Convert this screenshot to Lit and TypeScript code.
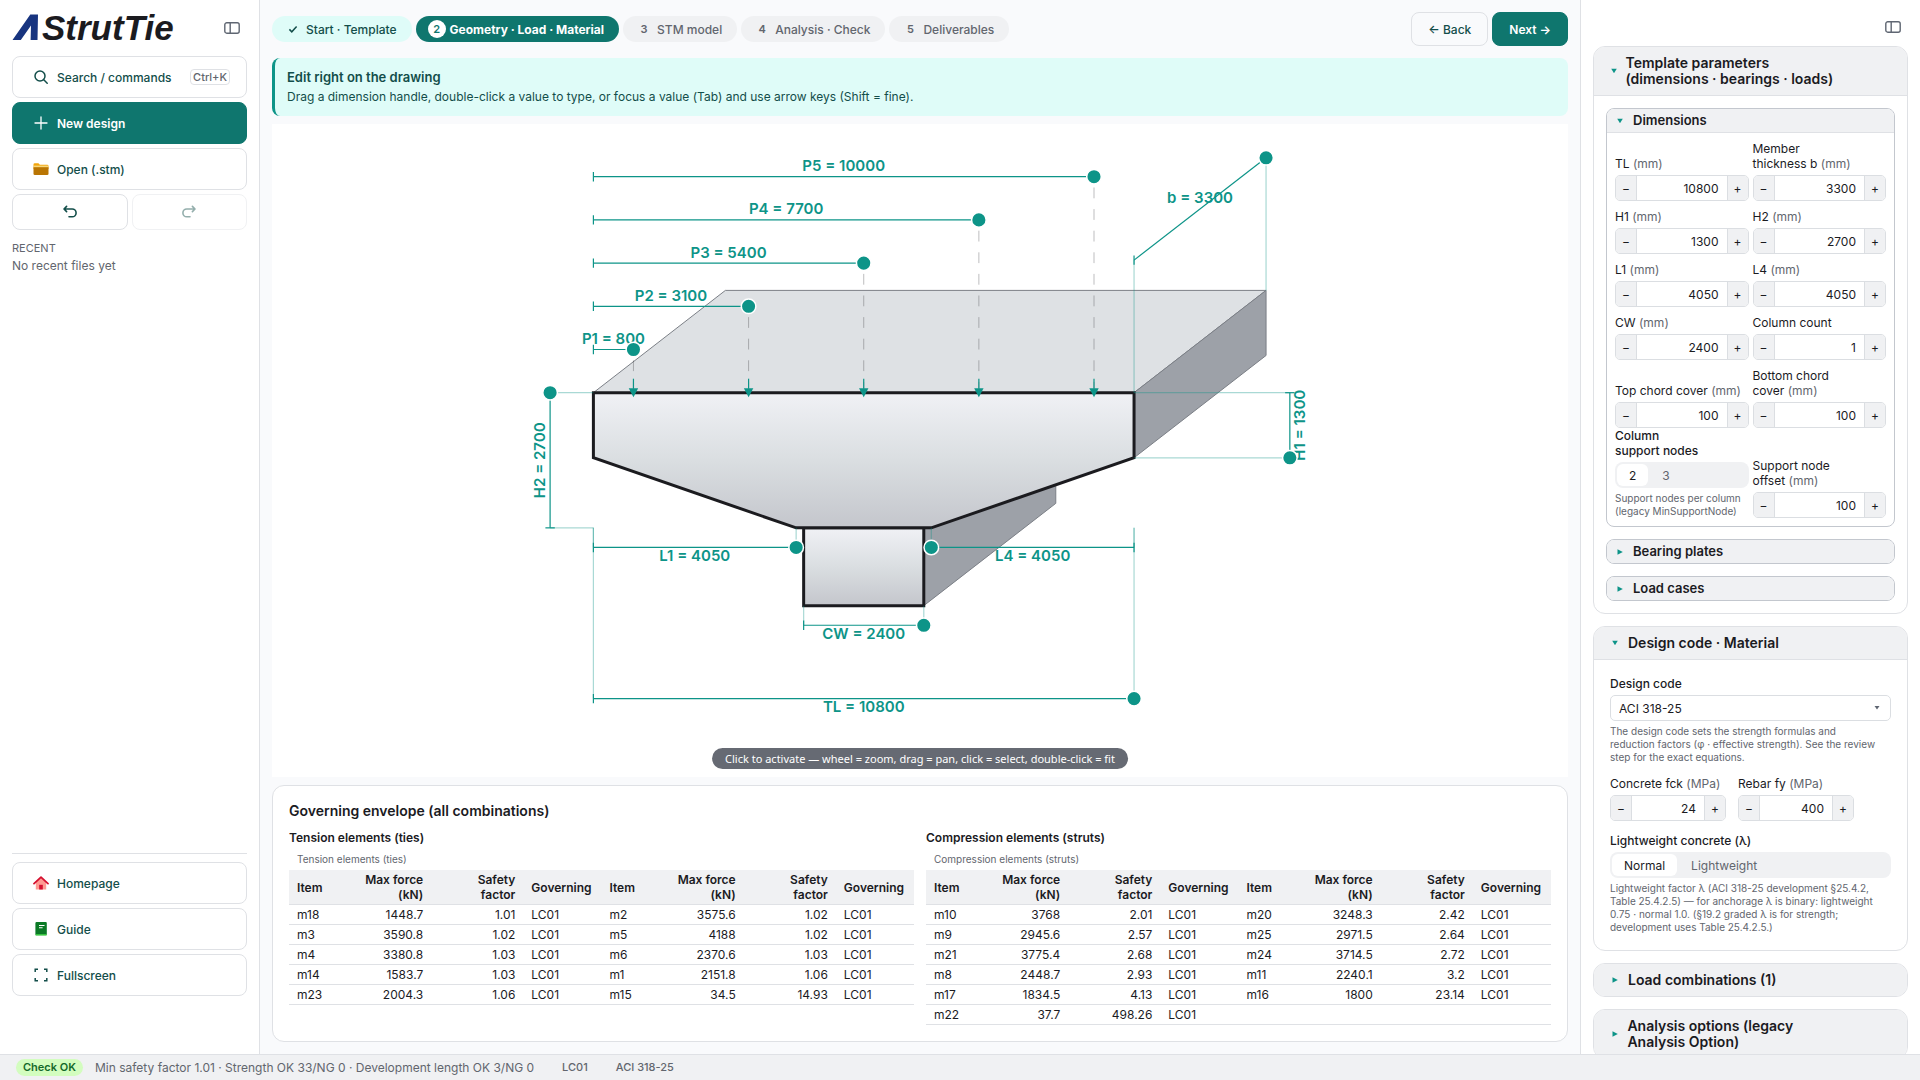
import { LitElement, html, svg, css, nothing } from "lit";
import { customElement, property, state } from "lit/decorators.js";
import { classMap } from "lit/directives/class-map.js";

const base = css`
  *, *::before, *::after { box-sizing: border-box; }
  :host { display: block; }
  button, input, select { font: inherit; color: inherit; margin: 0; }
  svg { display: block; flex: none; }
`;

/* ---------- icons ---------- */

const panelIcon = html`<svg width="16" height="12" viewBox="0 0 16 12" fill="none" stroke="#5f6672" stroke-width="1.4" aria-hidden="true">
  <rect x="0.8" y="0.8" width="14.4" height="10.4" rx="2" /><path d="M6.2 1v10" /></svg>`;

const searchIcon = html`<svg width="16" height="16" viewBox="0 0 16 16" fill="none" stroke="#134e4a" stroke-width="1.5" stroke-linecap="round" aria-hidden="true">
  <circle cx="7" cy="7" r="5" /><path d="M10.8 10.8 14.2 14.2" /></svg>`;

const plusIcon = html`<svg width="16" height="16" viewBox="0 0 16 16" fill="none" stroke="#ffffff" stroke-width="1.3" stroke-linecap="round" aria-hidden="true">
  <path d="M8 2v12M2 8h12" /></svg>`;

const folderIcon = html`<svg width="16" height="16" viewBox="0 0 16 16" aria-hidden="true">
  <path d="M0.5 3.5a1.3 1.3 0 0 1 1.3-1.3h3.6l1.5 1.5h7.3a1.3 1.3 0 0 1 1.3 1.3v3H0.5z" fill="#f2a50c" />
  <rect x="1" y="4.6" width="14" height="2" fill="#f8d77a" />
  <path d="M0.5 6.2h15v6.5a1.3 1.3 0 0 1-1.3 1.3H1.8a1.3 1.3 0 0 1-1.3-1.3z" fill="#b97503" /></svg>`;

const homeIcon = html`<svg width="16" height="16" viewBox="0 0 16 16" aria-hidden="true">
  <path d="M2.8 7.2 8 2.4l5.2 4.8v7.3H2.8z" fill="#ff9b93" />
  <rect x="6.2" y="9.8" width="3.6" height="4.7" fill="#d5102f" />
  <path d="M1 8.6 8 2.2l7 6.4" fill="none" stroke="#d5102f" stroke-width="1.8" stroke-linecap="round" stroke-linejoin="round" /></svg>`;

const bookIcon = html`<svg width="16" height="16" viewBox="0 0 16 16" aria-hidden="true">
  <path d="M3.6 1h9.2a1 1 0 0 1 1 1v11.8H2.4V2.2A1.2 1.2 0 0 1 3.6 1z" fill="#0b7a26" />
  <rect x="2.6" y="13" width="11" height="1.6" fill="#36c43f" />
  <path d="M6 4.5h5.5M6 6.8h3.6" stroke="#ffffff" stroke-width="1.1" /></svg>`;

const fullscreenIcon = html`<svg width="16" height="16" viewBox="0 0 16 16" fill="none" stroke="#134e4a" stroke-width="1.5" aria-hidden="true">
  <path d="M2.2 5V2.2H5M11 2.2h2.8V5M13.8 11v2.8H11M5 13.8H2.2V11" /></svg>`;

const undoIcon = html`<svg width="16" height="16" viewBox="0 0 16 16" fill="none" stroke="#134e4a" stroke-width="1.6" stroke-linecap="round" stroke-linejoin="round" aria-hidden="true">
  <path d="M4.6 2.4 2 5l2.6 2.6M2.4 5h7.8a3.9 3.9 0 0 1 0 7.8H7" /></svg>`;

const redoIcon = html`<svg width="16" height="16" viewBox="0 0 16 16" fill="none" stroke="#134e4a" stroke-width="1.6" stroke-linecap="round" stroke-linejoin="round" aria-hidden="true">
  <path d="M11.4 2.4 14 5l-2.6 2.6M13.6 5H5.8a3.9 3.9 0 0 0 0 7.8H9" /></svg>`;

const checkIcon = html`<svg width="18" height="18" viewBox="0 0 18 18" fill="none" stroke="#134e4a" stroke-width="1.5" aria-hidden="true">
  <path d="M5.4 9.4 7.8 11.8 12.6 6.6" /></svg>`;

/* ---------- stepper field ---------- */

@customElement("number-field")
class NumberField extends LitElement {
  @property() label = "";
  @property() unit = "";
  @property({ type: Number }) value = 0;

  static styles = [base, css`
    :host { min-width: 0; }
    .label { display: block; margin-bottom: 4px; color: #1b1b1f; text-wrap: balance; }
    .unit { color: #62666e; white-space: nowrap; }
    .box { display: flex; height: 26px; border: 1px solid #dbdee2; border-radius: 5px; overflow: hidden; background: #fff; }
    .step { flex: none; width: 21px; padding: 0; border: 0; background: #f0f1f3; color: #1b1b1f; cursor: pointer; }
    .step:first-child { border-right: 1px solid #dbdee2; }
    .step:last-child { border-left: 1px solid #dbdee2; }
    .input { flex: 1; min-width: 0; width: 0; border: 0; padding: 0 8px; text-align: right; background: #fff; outline: none; }
  `];

  private bump(d: number) { this.value += d; }

  render() {
    return html`
      <label class="label" for="v">${this.label}${this.unit ? html` <span class="unit">(${this.unit})</span>` : nothing}</label>
      <div class="box">
        <button class="step" type="button" aria-label="Decrease ${this.label}" @click=${() => this.bump(-1)}>−</button>
        <input class="input" id="v" type="text" inputmode="numeric" .value=${String(this.value)}
          @change=${(e: Event) => { this.value = Number((e.target as HTMLInputElement).value) || 0; }} />
        <button class="step" type="button" aria-label="Increase ${this.label}" @click=${() => this.bump(1)}>+</button>
      </div>`;
  }
}

/* ---------- segmented choice ---------- */

@customElement("segmented-choice")
class SegmentedChoice extends LitElement {
  @property() label = "";
  @property() hint = "";
  @property({ attribute: false }) options: string[] = [];
  @state() private picked = 0;

  static styles = [base, css`
    .group { border: 0; margin: 0; padding: 0; min-width: 0; }
    .legend { padding: 0 12px 0 0; margin-bottom: 4px; color: #1b1b1f; font-weight: 500; text-wrap: balance; }
    .track { display: flex; gap: 2px; height: 26px; padding: 2px; border-radius: 8px; background: #f0f1f3; }
    .option { display: flex; align-items: center; padding: 0 12px; border-radius: 6px; color: #62666e; cursor: pointer; }
    .option.on { background: #fff; color: #1b1b1f; }
    .radio { appearance: none; width: 0; height: 0; margin: 0; }
    .hint { margin: 4px 0 0; font-size: 10px; line-height: 13px; color: #62666e; }
  `];

  render() {
    return html`
      <fieldset class="group">
        <legend class="legend">${this.label}</legend>
        <div class="track">
          ${this.options.map((o, i) => html`
            <label class=${classMap({ option: true, on: i === this.picked })}>
              <input class="radio" type="radio" name="choice" .checked=${i === this.picked} @change=${() => { this.picked = i; }} />${o}
            </label>`)}
        </div>
        <p class="hint">${this.hint}</p>
      </fieldset>`;
  }
}

/* ---------- collapsible panel ---------- */

@customElement("fold-card")
class FoldCard extends LitElement {
  @property() heading = "";
  @property({ type: Boolean }) open = false;
  @property({ type: Boolean, reflect: true }) inner = false;

  static styles = [base, css`
    .card { border: 1px solid #dfe1e5; border-radius: 12px; background: #fff; overflow: hidden; }
    .head { display: flex; align-items: center; gap: 8px; padding: 8px 16px; background: #f0f1f3; list-style: none; cursor: pointer;
      font-size: 14px; font-weight: 600; line-height: 16px; color: #1b1b1f; }
    .head::-webkit-details-marker { display: none; }
    .card[open] > .head { border-bottom: 1px solid #dfe1e5; }
    .chevron { flex: 0 1 10px; display: flex; justify-content: center; min-width: 6px; }
    .title { text-wrap: balance; }
    .body { padding: 12px; }
    :host([inner]) .card { border-color: #c3c7ce; border-radius: 8px; }
    :host([inner]) .head { padding: 4px 8px; font-size: 13px; line-height: 15px; }
    :host([inner]) .body { padding: 8px; }
  `];

  render() {
    return html`
      <details class="card" ?open=${this.open} @toggle=${(e: Event) => { this.open = (e.target as HTMLDetailsElement).open; }}>
        <summary class="head">
          <span class="chevron"><svg width="6" height="6" viewBox="0 0 6 6" fill="#0d9488" aria-hidden="true">
            <path d=${this.open ? "M0.2 0.8h5.6L3 5.2z" : "M0.5 0.2v5.6L5.8 3z"} /></svg></span>
          <span class="title">${this.heading}</span>
        </summary>
        <div class="body"><slot></slot></div>
      </details>`;
  }
}

/* ---------- parametric drawing ---------- */

@customElement("pier-drawing")
class PierDrawing extends LitElement {
  @property({ attribute: false }) model = { TL: 10800, b: 3300, H1: 1300, H2: 2700, L1: 4050, L4: 4050, CW: 2400, P: [800, 3100, 5400, 7700, 10000] };

  static styles = [base, css`
    :host { height: 100%; }
    .drawing { width: 100%; height: 100%; }
    .face { stroke: #1b1b1f; stroke-width: 3; stroke-linejoin: miter; }
    .top { fill: #dee1e4; stroke: #7b7f86; stroke-width: 1; }
    .side { fill: #9da1a8; stroke: #7b7f86; stroke-width: 1; }
    .dim { stroke: #0d9488; stroke-width: 1.2; fill: none; }
    .ext { stroke: #0d9488; stroke-width: 1.2; opacity: 0.35; }
    .drop { stroke: #1b1b1f; stroke-width: 1; opacity: 0.28; stroke-dasharray: 10.8 10.8; }
    .arrow { fill: #0d9488; }
    .handle { fill: #0d9488; stroke: #fff; stroke-width: 1.5; cursor: grab; }
    .value { fill: #0d9488; font-size: 15px; font-weight: 600; text-anchor: middle; }
  `];

  private line(x1: number, y1: number, x2: number, y2: number, cls = "dim") {
    return svg`<line class=${cls} x1=${x1} y1=${y1} x2=${x2} y2=${y2} />`;
  }
  private tag(x: number, y: number, t: string, vertical = false) {
    return svg`<text class="value" x=${x} y=${y} transform=${vertical ? `rotate(-90 ${x} ${y})` : nothing}>${t}</text>`;
  }
  private knob(x: number, y: number) {
    return svg`<circle class="handle" cx=${x} cy=${y} r="7.3" />`;
  }

  render() {
    const m = this.model;
    const k = 0.05006;
    const x0 = 321.4, y0 = 268.7;
    const x1 = x0 + m.TL * k, yh = y0 + m.H1 * k, yb = y0 + m.H2 * k;
    const a = x0 + m.L1 * k, b = x1 - m.L4 * k;
    const mid = (x0 + x1) / 2, c0 = mid - m.CW * k / 2, c1 = mid + m.CW * k / 2, yc = yb + 77.8;
    const dx = m.b * 0.04, dy = -m.b * 0.031;
    const yd = yb + 19.6, yw = yc + 19.6, yt = 574.6, xl = x0 - 43.3, xr = x1 + 155.8, ye = y0 - 132.6;
    return html`
      <svg class="drawing" viewBox="0 0 1296 653" role="img" aria-label="Pier cap geometry with editable dimensions">
        <defs>
          <linearGradient id="concrete" x1="0" y1="0" x2="0" y2="1">
            <stop offset="0" stop-color="#f0f1f5" /><stop offset="0.5" stop-color="#dadee1" /><stop offset="1" stop-color="#c4c6cc" />
          </linearGradient>
        </defs>
        <polygon class="side" points="${c1},${yb} ${c1 + dx},${yb + dy} ${c1 + dx},${yc + dy} ${c1},${yc}" />
        <polygon class="top" points="${x0},${y0} ${x0 + dx},${y0 + dy} ${x1 + dx},${y0 + dy} ${x1},${y0}" />
        <polygon class="side" points="${x1},${y0} ${x1 + dx},${y0 + dy} ${x1 + dx},${yh + dy} ${x1},${yh}" />
        <polygon class="face" fill="url(#concrete)" points="${c0},${yb} ${c1},${yb} ${c1},${yc} ${c0},${yc}" />
        <polygon class="face" fill="url(#concrete)" points="${x0},${y0} ${x1},${y0} ${x1},${yh} ${b},${yb} ${a},${yb} ${x0},${yh}" />

        ${m.P.map((p, i) => {
          const x = x0 + p * k, y = y0 - 43.2 * (i + 1);
          return svg`
            ${this.line(x, y0, x, y, "drop")}
            ${this.line(x, y0 - 14, x, y0 - 4)}
            <polygon class="arrow" points="${x - 4.7},${y0 - 4.5} ${x + 4.7},${y0 - 4.5} ${x},${y0 + 4.5}" />
            ${this.line(x0, y, x, y)}${this.line(x0, y - 4.7, x0, y + 4.7)}
            ${this.tag((x0 + x) / 2, y - 5.5, `P${i + 1} = ${p}`)}${this.knob(x, y)}`;
        })}

        ${this.line(x1, y0, x1, ye, "ext")}${this.line(x1 + dx, y0 + dy, x1 + dx, ye + dy, "ext")}
        ${this.line(x1, ye, x1 + dx, ye + dy)}${this.line(x1, ye - 4.7, x1, ye + 4.7)}
        ${this.tag(x1 + dx / 2, ye + dy / 2 - 6, `b = ${m.b}`)}${this.knob(x1 + dx, ye + dy)}

        ${this.line(xl, y0, x0, y0, "ext")}${this.line(xl, yb, x0, yb, "ext")}
        ${this.line(xl, y0, xl, yb)}${this.line(xl - 4.7, yb, xl + 4.7, yb)}
        ${this.tag(xl - 5.5, (y0 + yb) / 2, `H2 = ${m.H2}`, true)}${this.knob(xl, y0)}

        ${this.line(x1, y0, xr, y0, "ext")}${this.line(x1, yh, xr, yh, "ext")}
        ${this.line(xr, y0, xr, yh)}${this.line(xr - 4.7, y0, xr + 4.7, y0)}
        ${this.tag(xr + 15, (y0 + yh) / 2, `H1 = ${m.H1}`, true)}${this.knob(xr, yh)}

        ${this.line(x0, yb, x0, yd, "ext")}${this.line(x1, yb, x1, yd, "ext")}${this.line(a, yb, a, yd, "ext")}${this.line(b, yb, b, yd, "ext")}
        ${this.line(x0, yd, a, yd)}${this.line(x0, yd - 4.7, x0, yd + 4.7)}
        ${this.tag((x0 + a) / 2, yd + 13.7, `L1 = ${m.L1}`)}${this.knob(a, yd)}
        ${this.line(b, yd, x1, yd)}${this.line(x1, yd - 4.7, x1, yd + 4.7)}
        ${this.tag((b + x1) / 2, yd + 13.7, `L4 = ${m.L4}`)}${this.knob(b, yd)}

        ${this.line(c0, yc, c0, yw, "ext")}${this.line(c1, yc, c1, yw, "ext")}
        ${this.line(c0, yw, c1, yw)}${this.line(c0, yw - 4.7, c0, yw + 4.7)}
        ${this.tag(mid, yw + 13.7, `CW = ${m.CW}`)}${this.knob(c1, yw)}

        ${this.line(x0, yb, x0, yt, "ext")}${this.line(x1, yb, x1, yt, "ext")}
        ${this.line(x0, yt, x1, yt)}${this.line(x0, yt - 4.7, x0, yt + 4.7)}
        ${this.tag(mid, yt + 13.7, `TL = ${m.TL}`)}${this.knob(x1, yt)}
      </svg>`;
  }
}

/* ---------- results ---------- */

type Cell = [string, string, string];

const tension: Cell[][] = [
  [["m18", "1448.7", "1.01"], ["m2", "3575.6", "1.02"]],
  [["m3", "3590.8", "1.02"], ["m5", "4188", "1.02"]],
  [["m4", "3380.8", "1.03"], ["m6", "2370.6", "1.03"]],
  [["m14", "1583.7", "1.03"], ["m1", "2151.8", "1.06"]],
  [["m23", "2004.3", "1.06"], ["m15", "34.5", "14.93"]],
];

const compression: Cell[][] = [
  [["m10", "3768", "2.01"], ["m20", "3248.3", "2.42"]],
  [["m9", "2945.6", "2.57"], ["m25", "2971.5", "2.64"]],
  [["m21", "3775.4", "2.68"], ["m24", "3714.5", "2.72"]],
  [["m8", "2448.7", "2.93"], ["m11", "2240.1", "3.2"]],
  [["m17", "1834.5", "4.13"], ["m16", "1800", "23.14"]],
  [["m22", "37.7", "498.26"]],
];

@customElement("envelope-table")
class EnvelopeTable extends LitElement {
  @property() heading = "";
  @property({ attribute: false }) rows: Cell[][] = [];

  static styles = [base, css`
    :host { flex: 1; min-width: 0; }
    .heading { margin: 0 0 5px; font-size: 12px; font-weight: 600; line-height: 18px; color: #1b1b1f; }
    .table { width: 100%; table-layout: fixed; border-collapse: collapse; line-height: 15px; }
    .caption { padding: 0 8px 3px; text-align: left; font-size: 10px; line-height: 15px; color: #62666e; }
    .c-item { width: 52px; }
    .c-force { width: 90px; }
    .c-factor { width: 92px; }
    .c-gov { width: 78px; }
    .th, .td { padding: 2px 8px; text-align: left; border-bottom: 1px solid #dfe1e5; }
    .th { background: #f0f1f3; font-weight: 600; }
    .th.num { padding-left: 16px; }
    .num { text-align: right; }
    .td { white-space: nowrap; height: 20px; }
  `];

  render() {
    const pair = [0, 1];
    return html`
      <h3 class="heading">${this.heading}</h3>
      <table class="table">
        <caption class="caption">${this.heading}</caption>
        <colgroup>${pair.map(() => html`<col class="c-item" /><col class="c-force" /><col class="c-factor" /><col class="c-gov" />`)}</colgroup>
        <thead><tr>${pair.map(() => html`
          <th class="th" scope="col">Item</th><th class="th num" scope="col">Max force (kN)</th>
          <th class="th num" scope="col">Safety factor</th><th class="th" scope="col">Governing</th>`)}</tr></thead>
        <tbody>${this.rows.map(r => html`<tr>${pair.map(i => r[i]
          ? html`<td class="td">${r[i][0]}</td><td class="td num">${r[i][1]}</td><td class="td num">${r[i][2]}</td><td class="td">LC01</td>`
          : html`<td class="td" colspan="4"></td>`)}</tr>`)}</tbody>
      </table>`;
  }
}

/* ---------- page ---------- */

const steps = ["Start · Template", "Geometry · Load · Material", "STM model", "Analysis · Check", "Deliverables"];

@customElement("app-root")
class AppRoot extends LitElement {
  @state() private step = 1;

  static styles = [base, css`
    :host { display: grid; grid-template: minmax(0, 1fr) auto / 260px minmax(0, 1fr) 340px; height: 100vh; overflow: hidden;
      background: #f9fafc; color: #1b1b1f; font: 12px/15px Inter, "Noto Sans", sans-serif; }
    .nav { display: flex; flex-direction: column; gap: 4px; padding: 12px; background: #fff; border-right: 1px solid #dfe1e5; }
    .brand { display: flex; align-items: center; justify-content: space-between; height: 32px; margin-bottom: 8px; padding-right: 7px; }
    .icon-btn { padding: 0; border: 0; background: none; cursor: pointer; }
    .logo { overflow: visible; }
    .btn { display: flex; align-items: center; gap: 8px; border: 1px solid #dfe1e5; border-radius: 8px; background: #fff; color: #134e4a;
      font-weight: 500; text-decoration: none; cursor: pointer; }
    .btn.wide { height: 42px; padding: 0 16px 0 20px; }
    .btn.solid { background: #0f766e; border-color: #0f766e; color: #fff; font-weight: 600; }
    .btn.half { flex: 1; height: 36px; justify-content: center; padding: 0; }
    .btn.half:disabled { opacity: 0.45; cursor: default; }
    .btn.go { height: 34px; padding: 0 16px; background: #f9fafc; }
    .btn.go.solid { background: #0f766e; }
    .kbd { margin-left: auto; padding: 0 2px; border: 1px solid #dfe1e5; border-radius: 4px; font: inherit; font-size: 11px; line-height: 14px; color: #62666e; }
    .pair { display: flex; gap: 4px; }
    .recents { margin-top: 5px; line-height: 18px; color: #62666e; }
    .recent { margin: 0; font-size: 11px; font-weight: 400; }
    .empty { margin: 0; }
    .links { display: flex; flex-direction: column; gap: 4px; margin-top: auto; margin-bottom: 46px; padding-top: 8px; border-top: 1px solid #dfe1e5; }

    .main { display: flex; flex-direction: column; min-width: 0; min-height: 0; padding: 12px; }
    .bar { display: flex; align-items: center; justify-content: space-between; margin-bottom: 12px; }
    .steps { display: flex; gap: 4px; margin: 0; padding: 0; list-style: none; }
    .step { display: flex; align-items: center; gap: 4px; height: 26px; padding: 0 15px 0 12px; border: 0; border-radius: 13px; background: #f0f1f3; color: #62666e; font-weight: 500; cursor: pointer; }
    .step.done { background: #dffcf8; color: #134e4a; }
    .step.now { background: #0f766e; color: #fff; font-weight: 700; }
    .dot { display: flex; align-items: center; justify-content: center; width: 18px; height: 18px; border-radius: 9px; font-size: 11px; font-weight: 600; }
    .now .dot { background: #fff; color: #0f766e; }
    .actions { display: flex; gap: 4px; }
    .banner { margin-bottom: 8px; padding: 10px 12px; border-left: 3px solid #0d9488; border-radius: 8px; background: #dffcf8; color: #134e4a; line-height: 19px; }
    .banner-title { margin: 0; font-size: 13px; font-weight: 600; }
    .banner-text { margin: 0; }
    .canvas { position: relative; flex: 1; min-height: 0; margin-bottom: 8px; background: #fff; }
    .tip { position: absolute; left: 50%; bottom: 8px; transform: translateX(-50%); margin: 0; padding: 3px 13px; border-radius: 11px;
      background: #666a73; color: #fff; font-family: "Noto Sans", sans-serif; font-size: 11px; white-space: nowrap; }
    .results { padding: 16px; border: 1px solid #dfe1e5; border-radius: 12px; background: #fff; }
    .results-title { margin: 0 0 10px; font-size: 14px; font-weight: 600; line-height: 17px; }
    .tables { display: flex; gap: 12px; }

    .side { display: flex; flex-direction: column; gap: 12px; min-height: 0; padding: 0 12px; background: #fff; border-left: 1px solid #dfe1e5; overflow-y: auto; scrollbar-width: none; }
    .side > * { flex: none; }
    .side-top { display: flex; justify-content: flex-end; padding: 21px 7px 1px 0; }
    .stack { display: flex; flex-direction: column; gap: 12px; }
    .grid { display: grid; grid-template-columns: 1fr 1fr; gap: 8px 4px; align-items: end; }
    .fields { display: flex; flex-direction: column; gap: 12px; padding: 4px; }
    .label { display: block; margin-bottom: 4px; font-weight: 500; }
    .select { display: grid; align-items: center; }
    .select > * { grid-area: 1 / 1; }
    .select-box { width: 100%; height: 26px; padding: 0 8px; border: 1px solid #dbdee2; border-radius: 5px; background: #fff; appearance: none; }
    .select-mark { justify-self: end; margin-right: 11px; pointer-events: none; }
    .hint { margin: 4px 0 0; padding-right: 12px; font-size: 10px; line-height: 13px; color: #62666e; }
    .duo { display: flex; gap: 12px; }
    .duo > * { width: 116px; }

    .status { grid-column: 1 / -1; display: flex; align-items: center; gap: 12px; height: 26px; padding: 0 16px; border-top: 1px solid #dfe1e5; background: #f0f1f3; color: #62666e; }
    .badge { padding: 0 7px; border-radius: 9px; background: #d3fdbf; color: #15692a; font-size: 11px; font-weight: 600; line-height: 17px; }
    .summary { padding-right: 8px; }
    .meta { padding: 0 8px; font-size: 11px; font-weight: 500; }
  `];

  private sidebar() {
    return html`
      <nav class="nav" aria-label="Project">
        <div class="brand">
          <svg class="logo" width="170" height="32" viewBox="0 0 170 32" role="img" aria-label="AStrutTie">
            <path d="M0.5 28 18.3 2.5H26L25.5 28H18.6L19 13.5 8.8 28z" fill="#17347f" />
            <text x="30" y="27.5" font-family="'Liberation Sans', Arial, sans-serif" font-size="35" font-weight="700" font-style="italic" fill="#1b1b1f">StrutTie</text>
          </svg>
          <button class="icon-btn" type="button" aria-label="Collapse sidebar">${panelIcon}</button>
        </div>
        <button class="btn wide" type="button">${searchIcon}Search / commands<kbd class="kbd">Ctrl+K</kbd></button>
        <button class="btn wide solid" type="button">${plusIcon}New design</button>
        <button class="btn wide" type="button">${folderIcon}Open (.stm)</button>
        <div class="pair">
          <button class="btn half" type="button" aria-label="Undo">${undoIcon}</button>
          <button class="btn half" type="button" aria-label="Redo" disabled>${redoIcon}</button>
        </div>
        <div class="recents">
          <h2 class="recent">RECENT</h2>
          <p class="empty">No recent files yet</p>
        </div>
        <div class="links">
          <a class="btn wide" href="#home">${homeIcon}Homepage</a>
          <a class="btn wide" href="#guide">${bookIcon}Guide</a>
          <button class="btn wide" type="button">${fullscreenIcon}Fullscreen</button>
        </div>
      </nav>`;
  }

  private workspace() {
    return html`
      <main class="main">
        <div class="bar">
          <ol class="steps">
            ${steps.map((s, i) => html`<li>
              <button type="button" class=${classMap({ step: true, done: i < this.step, now: i === this.step })} @click=${() => { this.step = i; }}>
                <span class="dot">${i < this.step ? checkIcon : i + 1}</span>${s}
              </button></li>`)}
          </ol>
          <div class="actions">
            <button class="btn go" type="button">← Back</button>
            <button class="btn go solid" type="button">Next →</button>
          </div>
        </div>
        <section class="banner">
          <h2 class="banner-title">Edit right on the drawing</h2>
          <p class="banner-text">Drag a dimension handle, double-click a value to type, or focus a value (Tab) and use arrow keys (Shift = fine).</p>
        </section>
        <section class="canvas">
          <pier-drawing></pier-drawing>
          <p class="tip">Click to activate — wheel = zoom, drag = pan, click = select, double-click = fit</p>
        </section>
        <section class="results">
          <h2 class="results-title">Governing envelope (all combinations)</h2>
          <div class="tables">
            <envelope-table heading="Tension elements (ties)" .rows=${tension}></envelope-table>
            <envelope-table heading="Compression elements (struts)" .rows=${compression}></envelope-table>
          </div>
        </section>
      </main>`;
  }

  private inspector() {
    return html`
      <aside class="side" aria-label="Parameters">
        <div class="side-top"><button class="icon-btn" type="button" aria-label="Collapse parameters">${panelIcon}</button></div>
        <fold-card heading="Template parameters (dimensions · bearings · loads)" open>
          <div class="stack">
            <fold-card heading="Dimensions" open inner>
              <div class="grid">
                <number-field label="TL" unit="mm" value="10800"></number-field>
                <number-field label="Member thickness b" unit="mm" value="3300"></number-field>
                <number-field label="H1" unit="mm" value="1300"></number-field>
                <number-field label="H2" unit="mm" value="2700"></number-field>
                <number-field label="L1" unit="mm" value="4050"></number-field>
                <number-field label="L4" unit="mm" value="4050"></number-field>
                <number-field label="CW" unit="mm" value="2400"></number-field>
                <number-field label="Column count" value="1"></number-field>
                <number-field label="Top chord cover" unit="mm" value="100"></number-field>
                <number-field label="Bottom chord cover" unit="mm" value="100"></number-field>
              </div>
              <div class="grid">
                <segmented-choice label="Column support nodes" .options=${["2", "3"]} hint="Support nodes per column (legacy MinSupportNode)"></segmented-choice>
                <number-field label="Support node offset" unit="mm" value="100"></number-field>
              </div>
            </fold-card>
            <fold-card heading="Bearing plates" inner></fold-card>
            <fold-card heading="Load cases" inner></fold-card>
          </div>
        </fold-card>
        <fold-card heading="Design code · Material" open>
          <div class="fields">
            <div>
              <label class="label" for="code">Design code</label>
              <div class="select">
                <select class="select-box" id="code"><option>ACI 318-25</option></select>
                <svg class="select-mark" width="6" height="6" viewBox="0 0 6 6" fill="#5f6672" aria-hidden="true"><path d="M0.5 1h5L3 4.5z" /></svg>
              </div>
              <p class="hint">The design code sets the strength formulas and reduction factors (φ · effective strength). See the review step for the exact equations.</p>
            </div>
            <div class="duo">
              <number-field label="Concrete fck" unit="MPa" value="24"></number-field>
              <number-field label="Rebar fy" unit="MPa" value="400"></number-field>
            </div>
            <segmented-choice label="Lightweight concrete (λ)" .options=${["Normal", "Lightweight"]}
              hint="Lightweight factor λ (ACI 318-25 development §25.4.2, Table 25.4.2.5) — for anchorage λ is binary: lightweight 0.75 · normal 1.0. (§19.2 graded λ is for strength; development uses Table 25.4.2.5.)"></segmented-choice>
          </div>
        </fold-card>
        <fold-card heading="Load combinations (1)"></fold-card>
        <fold-card heading="Analysis options&nbsp;(legacy Analysis&nbsp;Option)"></fold-card>
      </aside>`;
  }

  render() {
    return html`
      ${this.sidebar()}${this.workspace()}${this.inspector()}
      <footer class="status">
        <span class="badge">Check OK</span>
        <span class="summary">Min safety factor 1.01 · Strength OK 33/NG 0 · Development length OK 3/NG 0</span>
        <span class="meta">LC01</span>
        <span class="meta">ACI 318-25</span>
      </footer>`;
  }
}
